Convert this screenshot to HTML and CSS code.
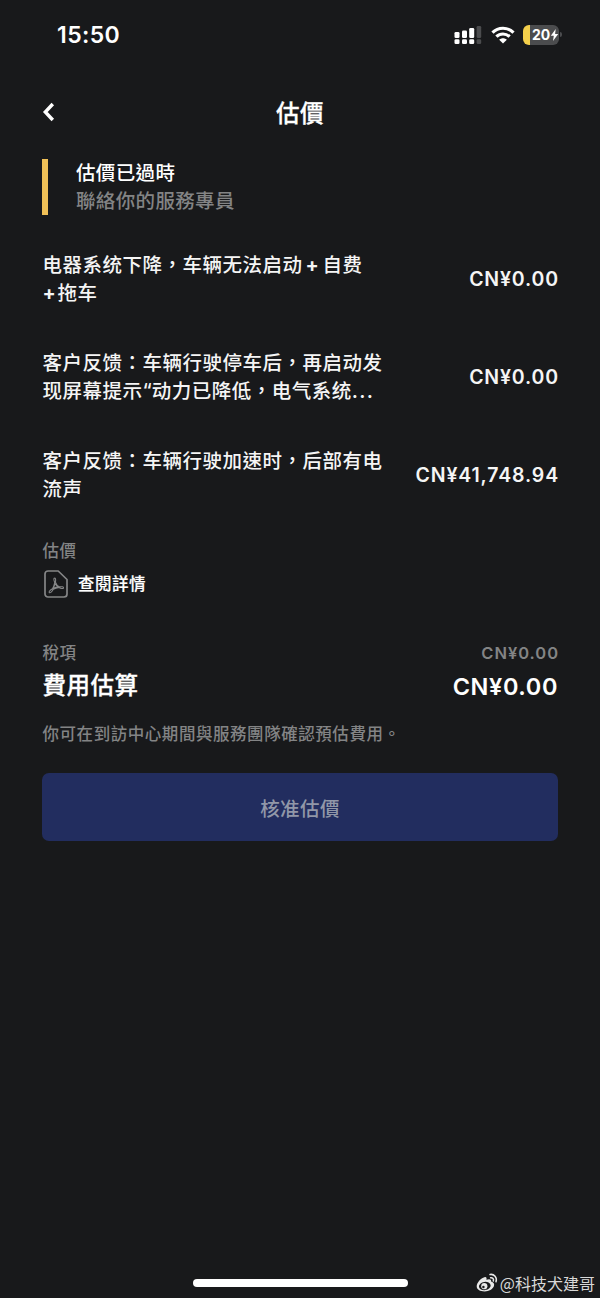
FILE: index.html
```html
<!DOCTYPE html>
<html lang="zh-Hant">
<head>
<meta charset="utf-8">
<title>估價</title>
<link rel="stylesheet" href="styles.css">
</head>
<body>
<div class="screen">
  <header class="status">
    <span class="clock">15:50</span>
    <div class="indicators">
      <svg class="signal" width="28" height="20" viewBox="0 0 28 20" fill="#fff">
        <rect x="0.5" y="7" width="5" height="6" rx="1.3"/><rect x="8" y="5.5" width="5" height="7.5" rx="1.3"/><rect x="15.2" y="3" width="5" height="10" rx="1.3"/><rect x="22.6" y="1" width="4.6" height="12" rx="1.3" fill="#4b4c4e"/>
        <rect x="0.5" y="14.2" width="5" height="4.8" rx="1.3"/><rect x="8" y="14.2" width="5" height="4.8" rx="1.3"/><rect x="15.2" y="14.2" width="5" height="4.8" rx="1.3"/><rect x="22.6" y="14.2" width="4.6" height="4.8" rx="1.3" fill="#4b4c4e"/>
      </svg>
      <svg class="wifi" width="24" height="18" viewBox="0 0 24 18" fill="none" stroke="#fff" stroke-width="3.2">
        <path d="M1.5 6.6C7.3.8 16.7.8 22.5 6.6"/><path d="M5.4 10.7c3.7-3.6 9.5-3.6 13.2 0"/><path d="M12 17.6 8.2 13.7c2.2-2 5.4-2 7.6 0z" fill="#fff" stroke="none"/>
      </svg>
      <div class="battery"><span class="level">20</span><svg width="9" height="12" viewBox="0 0 8 12" fill="#fff"><path d="M5.2 0 .3 6.7h3L2.5 12l5.2-6.9H4.6z"/></svg></div>
    </div>
  </header>
  <nav class="titlebar">
    <svg class="back" width="14" height="22" viewBox="0 0 14 22" fill="none" stroke="#fff" stroke-width="3.4"><path d="M10.8 2 3.3 10l7.5 8"/></svg>
    <h1 class="title">估價</h1>
  </nav>
  <main class="content">
    <section class="notice">
      <div class="notice-title">估價已過時</div>
      <div class="notice-sub">聯絡你的服務專員</div>
    </section>
    <section class="items">
      <div class="item"><p class="desc">电器系统下降，车辆无法启动<span class="plus mid">+</span>自费<br><span class="plus">+</span>拖车</p><span class="amount">CN¥0.00</span></div>
      <div class="item"><p class="desc">客户反馈：车辆行驶停车后，再启动发<br>现屏幕提示<span class="quote">“</span>动力已降低，电气系统<span class="dots">...</span></p><span class="amount">CN¥0.00</span></div>
      <div class="item"><p class="desc">客户反馈：车辆行驶加速时，后部有电<br>流声</p><span class="amount">CN¥41,748.94</span></div>
    </section>
    <section class="document">
      <div class="label">估價</div>
      <div class="doc-link">
        <svg width="24" height="28" viewBox="0 0 24 28" fill="none" stroke="#858687" stroke-linejoin="round">
          <path stroke-width="1.7" d="M4 1h10.2L23 9.5V24a3 3 0 0 1-3 3H4a3 3 0 0 1-3-3V4a3 3 0 0 1 3-3z"/>
          <path stroke-width="1.1" d="M10.2 8.2c1.5-.5 1.7 1.4 1.2 4 .7 2.2 2.2 3.9 4.1 4.7 2.4-.4 4.1-.1 4 .9-.2 1.2-2.7.8-4.5-.3-2 .3-3.8.8-5.7 1.7-1.4 2.5-3 4.1-4 3.4-.8-.7.9-2.5 3.2-3.8 1.1-2.1 1.8-4.2 2.2-6.3-.8-2.2-1.1-3.9-.5-4.3zM11 13.5c-.4 1.7-1 3.4-1.9 4.9 1.7-.7 3.4-1.2 5.3-1.5-1.6-1-2.7-2.1-3.4-3.4z"/>
        </svg>
        <span class="doc-text">查閱詳情</span>
      </div>
    </section>
    <section class="totals">
      <div class="tax"><span>稅項</span><span class="tax-value">CN¥0.00</span></div>
      <div class="total"><span class="total-label">費用估算</span><span class="total-value">CN¥0.00</span></div>
    </section>
    <p class="note">你可在到訪中心期間與服務團隊確認預估費用。</p>
    <button class="approve" type="button">核准估價</button>
  </main>
  <footer class="bottom">
    <div class="home"></div>
    <div class="watermark">
      <svg width="22" height="20" viewBox="0 0 22 20" fill="none">
        <path fill="#e8e8e8" d="M8.5 4.2c1.6-.5 2.5.5 1.9 2.6 2.6-1.1 5.2-.8 4.7 1.8 2.6.8 3.6 2.4 2.8 4.7-1.2 3-5 5.2-9.3 5.2C4 18.5.7 16.5.7 13.3.7 9.7 4.8 5.2 8.5 4.2z"/>
        <ellipse cx="8.8" cy="13" rx="5.9" ry="4.1" fill="#18191b" transform="rotate(-7 8.8 13)"/>
        <circle cx="8.3" cy="13.2" r="3.1" fill="#e8e8e8"/><circle cx="7.4" cy="14" r="1.2" fill="#18191b"/>
        <path stroke="#e8e8e8" stroke-width="1.5" stroke-linecap="round" d="M14 1.5c4-.8 7.5 3 6 7.3M14.6 4.7c2.1-.3 3.4 1.5 2.7 3.3"/>
      </svg>
      <span>@科技犬建哥</span>
    </div>
  </footer>
</div>
</body>
</html>
```
FILE: styles.css
```css
* { box-sizing: border-box; }
body { margin: 0; background: #18191b; }
.screen { width: 600px; height: 1298px; display: flex; flex-direction: column; background: #18191b; color: #f5f5f5; font-family: Inter, "Noto Sans CJK TC", sans-serif; font-weight: 500; overflow: hidden; }
h1, p { margin: 0; }
svg { display: block; flex: none; }
.status { height: 70px; padding: 0 41px 0 57px; display: flex; align-items: center; justify-content: space-between; }
.clock { font-size: 23px; font-weight: 600; letter-spacing: 0.4px; line-height: 28px; color: #fff; }
.indicators { display: flex; align-items: center; }
.signal { margin-top: -1px; }
.wifi { margin: -1px 0 0 9px; }
.battery { position: relative; width: 36px; height: 20px; margin: -1px 0 0 8px; padding-left: 9px; border-radius: 6px; display: flex; align-items: center; background: linear-gradient(90deg, #f3cf4b 7px, #4b4c4e 7px); }
.battery::after { content: ""; position: absolute; right: -3px; top: 7px; width: 2px; height: 5px; border-radius: 0 2px 2px 0; background: #4b4c4e; }
.level { font-size: 14px; font-weight: 700; line-height: 20px; color: #fff; }
.titlebar { height: 85px; padding: 0 42px; display: grid; grid-template-columns: 40px 1fr 40px; align-items: center; }
.title { font-size: 23.5px; font-weight: 500; letter-spacing: 0.5px; line-height: 32px; padding-top: 2px; text-align: center; color: #fff; -webkit-text-stroke: 0.3px; }
.content { padding: 4px 42px 0; }
.notice { height: 56px; padding: 0 0 0 28px; border-left: 6px solid #f0c057; font-size: 19.5px; line-height: 28px; letter-spacing: 0.35px; }
.notice-title { color: #fff; }
.notice-sub { color: #838485; }
.items { display: flex; flex-direction: column; gap: 42px; margin-top: 36px; }
.item { height: 56px; display: flex; align-items: center; justify-content: space-between; }
.desc { font-size: 19.5px; line-height: 28px; letter-spacing: 0.5px; white-space: nowrap; padding-left: 0.5px; }
.plus { display: inline-block; width: 15px; font-weight: 700; }
.plus.mid { width: 17px; margin-left: 3px; }
.quote { letter-spacing: 0; }
.dots { letter-spacing: 1.3px; font-weight: 600; }
.amount { font-size: 19.5px; font-weight: 600; letter-spacing: 0.85px; line-height: 28px; margin-right: -1px; }
.document { margin-top: 36px; }
.label { font-size: 16.5px; line-height: 24px; letter-spacing: 0.5px; padding-left: 0.5px; color: #838485; }
.doc-link { height: 42px; padding-left: 2px; display: flex; align-items: center; gap: 10px; }
.doc-text { font-size: 16.5px; letter-spacing: 0.5px; line-height: 24px; color: #fff; -webkit-text-stroke: 0.2px; }
.totals { margin-top: 36px; }
.tax, .total { display: flex; align-items: center; justify-content: space-between; padding-left: 0.5px; }
.tax { height: 24px; font-size: 16.5px; letter-spacing: 0.5px; line-height: 24px; color: #838485; }
.tax-value { font-weight: 600; letter-spacing: 0.95px; margin-right: -1px; }
.total { height: 44px; font-size: 23.5px; letter-spacing: 0.5px; line-height: 32px; color: #fff; }
.total-label { padding-bottom: 2px; -webkit-text-stroke: 0.3px; }
.total-value { font-weight: 600; letter-spacing: 0.6px; padding-bottom: 1px; }
.note { margin-top: 13px; font-size: 16.5px; line-height: 24px; letter-spacing: 0.55px; padding-left: 0.5px; color: #838485; white-space: nowrap; }
.approve { display: block; width: 516px; height: 68px; margin-top: 27px; padding: 3px 0 0; border: 0; border-radius: 7px; background: #222d5f; color: #9197a8; font: 500 19.5px/28px Inter, "Noto Sans CJK TC", sans-serif; letter-spacing: 0.4px; }
.bottom { margin-top: auto; height: 30px; padding: 0 5px 0 193px; display: flex; align-items: center; justify-content: space-between; }
.home { width: 215px; height: 8px; border-radius: 4px; background: #fff; }
.watermark { display: flex; align-items: center; gap: 2px; color: #d8d8d8; font-family: "Noto Sans CJK SC", sans-serif; font-size: 16px; line-height: 24px; font-weight: 400; white-space: nowrap; }
```
